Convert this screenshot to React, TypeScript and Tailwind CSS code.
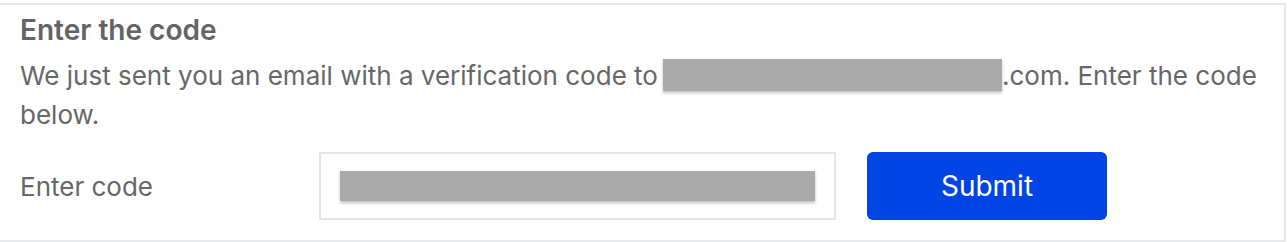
export default function App() {
  return (
    <div className="w-[1288px] h-[242px] bg-white overflow-hidden pt-[3px]" style={{ fontFamily: "Inter, 'Noto Sans', sans-serif" }}>
      <div className="ml-[-2px] w-[1288px] h-[239px] border-2 border-[#e6e9ec] pl-[20px] pr-[20px] pt-[7px] text-[#676767]">
        <h2 className="text-[28px] leading-[36px] font-semibold text-[#646464]">Enter the code</h2>
        <p className="mt-[8px] text-[26px] leading-[39px]">
          We just sent you an email with a verification code to
          <span className="inline-block align-middle ml-[5px] w-[339px] h-[32px] bg-[#aaaaaa] shadow-[0_2px_3px_rgba(0,0,0,0.25)] -mt-[6px]"></span>
          .com. Enter the code
          <br />
          below.
        </p>
        <div className="mt-[18px] flex items-center">
          <label className="w-[299px] text-[26px]">Enter code</label>
          <div className="w-[517px] h-[68px] border-2 border-[#e5e5e5] flex items-center pl-[19px]">
            <div className="w-[475px] h-[30px] bg-[#aaaaaa] shadow-[0_2px_3px_rgba(0,0,0,0.25)]"></div>
          </div>
          <button className="ml-[31px] w-[240px] h-[68px] rounded-[6px] bg-[#0044e3] text-white text-[28px]">Submit</button>
        </div>
      </div>
    </div>
  );
}
